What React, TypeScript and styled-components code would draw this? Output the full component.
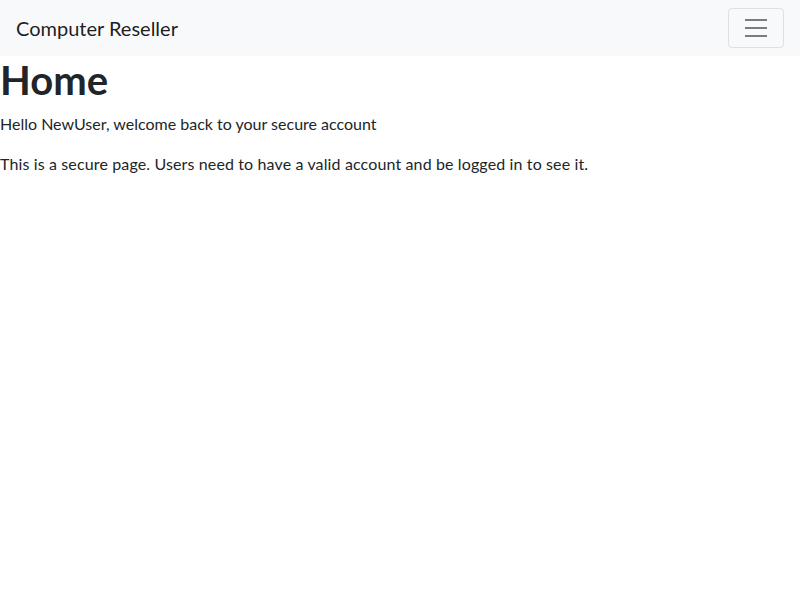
import React from "react";
import styled, { createGlobalStyle } from "styled-components";

const GlobalStyle = createGlobalStyle`
    body {
        margin: 0;
        font-family: "Lato", "Liberation Sans", sans-serif;
        font-size: 16px;
        line-height: 1.5;
        color: #212529;
        background: #fff;
    }
`;

const Navbar = styled.nav`
    display: flex;
    align-items: center;
    justify-content: space-between;
    padding: 8px 16px;
    background-color: #f8f9fa;
`;

const Brand = styled.a`
    padding: 5px 0;
    font-size: 20px;
    line-height: 30px;
    color: rgba(0, 0, 0, 0.9);
    text-decoration: none;
    white-space: nowrap;
`;

const Toggler = styled.button`
    display: flex;
    padding: 4px 12px;
    background: transparent;
    border: 1px solid rgba(0, 0, 0, 0.1);
    border-radius: 4px;
    cursor: pointer;
`;

const Main = styled.main`
    padding: 0;
`;

const Title = styled.h1`
    margin: 0 0 8px;
    font-size: 40px;
    font-weight: 700;
    line-height: 1.2;
`;

const Text = styled.p<{ $spacing?: number }>`
    margin: 0 0 16px;
    letter-spacing: ${(props) => props.$spacing ?? 0}px;
`;

function TogglerIcon() {
    return (
        <svg width="30" height="30" viewBox="0 0 30 30">
            <path
                stroke="rgba(0,0,0,0.5)"
                strokeWidth="2"
                strokeLinecap="butt"
                d="M4 7h22M4 15h22M4 23h22"
            />
        </svg>
    );
}

export default function App() {
    return (
        <>
            <GlobalStyle />
            <Navbar>
                <Brand href="#">Computer Reseller</Brand>
                <Toggler type="button" aria-label="Toggle navigation">
                    <TogglerIcon />
                </Toggler>
            </Navbar>
            <Main>
                <Title>Home</Title>
                <Text>Hello NewUser, welcome back to your secure account</Text>
                <Text $spacing={0.13}>
                    This is a secure page. Users need to have a valid account
                    and be logged in to see it.
                </Text>
            </Main>
        </>
    );
}
